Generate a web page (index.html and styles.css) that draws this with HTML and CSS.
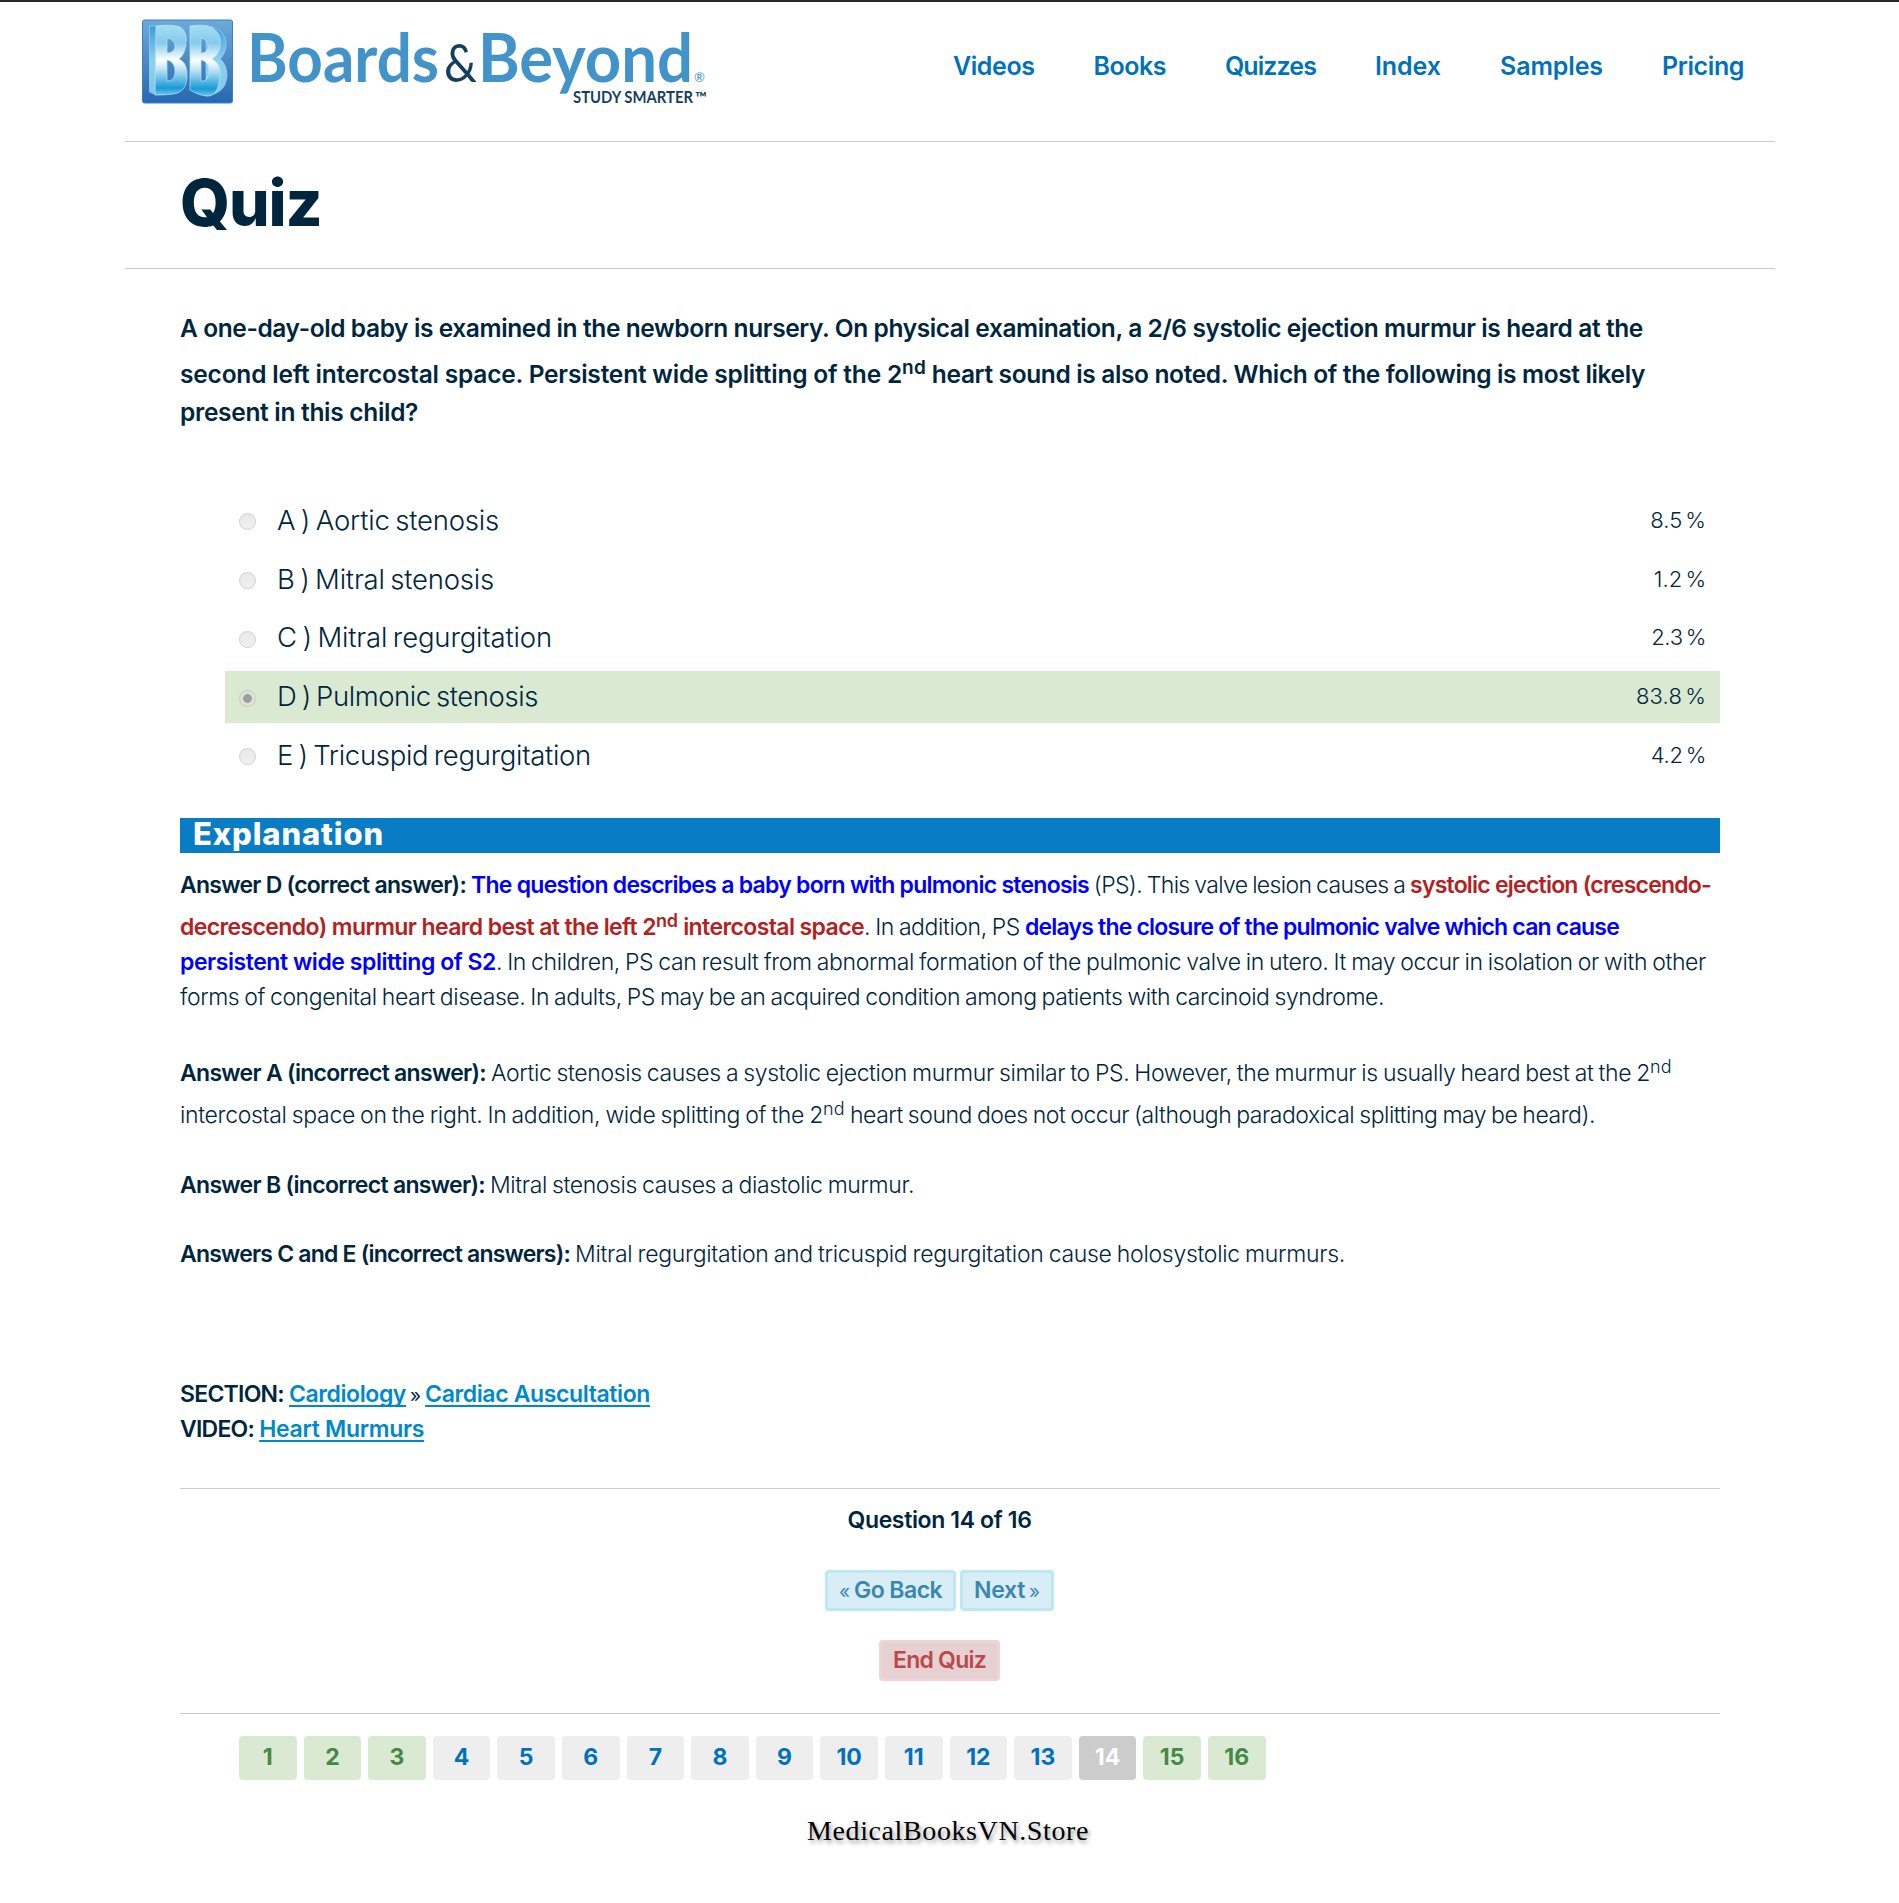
FILE: index.html
```html
<!DOCTYPE html>
<html lang="en">
<head>
<meta charset="utf-8">
<title>Quiz</title>
<link rel="stylesheet" href="styles.css">
</head>
<body>
<header class="header">
  <svg class="logo" width="580" height="92" viewBox="0 0 580 92" role="img" aria-label="Boards and Beyond">
    <defs>
      <linearGradient id="tile" x1="0" y1="0" x2="0" y2="1"><stop offset="0" stop-color="#6eaadb"/><stop offset="1" stop-color="#2668b2"/></linearGradient>
      <linearGradient id="face" x1="0" y1="0" x2="0" y2="1"><stop offset="0" stop-color="#a3def2"/><stop offset=".25" stop-color="#84cbec"/><stop offset=".5" stop-color="#fff"/><stop offset=".62" stop-color="#c5e6f6"/><stop offset=".9" stop-color="#189ad8"/><stop offset="1" stop-color="#6cc6ea"/></linearGradient>
      <linearGradient id="side" x1="0" y1="0" x2="0" y2="1"><stop offset="0" stop-color="#3a9fd8"/><stop offset=".5" stop-color="#8fd0ef"/><stop offset="1" stop-color="#7cc8ea"/></linearGradient>
    </defs>
    <rect x="6.500" y="4" width="90" height="83" rx="2" fill="url(#tile)" stroke="#3f7fc0"/>
    <path d="M13.500 10l7 0v69l-7-3z" fill="url(#side)" stroke="#a5dcf4" stroke-width=".6"/>
    <path d="M70 10c14 1 20 9 20 18 0 7-3 12-6 15 5 4 7 10 7 17-1 10-5 15-13 18l-8 2z" fill="url(#side)" stroke="#a5dcf4" stroke-width=".6"/>
    <path fill-rule="evenodd" d="M20 10q16-2 24 1c5 3 7 9 6 15 0 8-3 14-7 17 6 3 8 8 8 17 0 12-6 17-14 18-8 1-13 1-18 1zM31 22v15c5 0 8-3 8-7s-3-7-8-8zM31 44v21c6 0 8-4 8-10s-3-10-8-11z" fill="url(#face)" stroke="#b9e5f6" stroke-width=".7"/>
    <path fill-rule="evenodd" d="M54 10q14-2 21 1c7 4 10 10 9 17 0 7-3 12-8 15 7 4 9 10 8 17-1 14-6 20-12 20-6 0-13-3-18-6zM65 22v15c5 0 7-3 7-7s-3-7-7-8zM65 44v21c5 1 8-4 8-10s-3-10-8-11z" fill="url(#face)" stroke="#b9e5f6" stroke-width=".7"/>
    <g class="logo-word">
      <text x="111" y="65.500" font-size="67" textLength="192" lengthAdjust="spacingAndGlyphs">Boards</text>
      <text x="342" y="65.500" font-size="67" textLength="215" lengthAdjust="spacingAndGlyphs">Beyond</text>
      <text class="logo-dark" x="308" y="65.500" font-size="53" textLength="33" lengthAdjust="spacingAndGlyphs">&amp;</text>
      <text class="logo-mark" x="558" y="66" font-size="13">®</text>
      <text class="logo-dark logo-tag" x="437" y="87" font-size="17.500" textLength="120" lengthAdjust="spacingAndGlyphs">STUDY SMARTER</text>
      <text class="logo-dark logo-tag" x="559" y="87" font-size="15" textLength="12" lengthAdjust="spacingAndGlyphs">™</text>
    </g>
  </svg>
  <nav class="nav">
    <a class="nav-1">Videos</a><a class="nav-2">Books</a><a class="nav-3">Quizzes</a><a class="nav-4">Index</a><a class="nav-5">Samples</a><a class="nav-6">Pricing</a>
  </nav>
</header>
<section class="title"><h1>Quiz</h1></section>
<main class="main">
  <div class="question">
    <p class="line q-1">A one-day-old baby is examined in the newborn nursery. On physical examination, a 2/6 systolic ejection murmur is heard at the</p>
    <p class="line raised"><span class="q-2">second left intercostal space. Persistent wide splitting of the 2</span><sup>nd</sup><span class="q-3"> heart sound is also noted. Which of the following is most likely</span></p>
    <p class="line q-4">present in this child?</p>
  </div>
  <ul class="options">
    <li class="option"><i class="radio"></i><span class="label opt-a">A ) Aortic stenosis</span><span class="pct">8.5 %</span></li>
    <li class="option"><i class="radio"></i><span class="label opt-b">B ) Mitral stenosis</span><span class="pct">1.2 %</span></li>
    <li class="option"><i class="radio"></i><span class="label opt-c">C ) Mitral regurgitation</span><span class="pct pct-tight">2.3 %</span></li>
    <li class="option correct"><i class="radio on"></i><span class="label opt-d">D ) Pulmonic stenosis</span><span class="pct pct-wide">83.8 %</span></li>
    <li class="option"><i class="radio"></i><span class="label opt-e">E ) Tricuspid regurgitation</span><span class="pct pct-tight">4.2 %</span></li>
  </ul>
  <h2 class="bar">Explanation</h2>
  <div class="explain">
    <p class="line"><b class="d-1">Answer D (correct answer): </b><b class="blue d-2">The question describes a baby born with pulmonic stenosis</b><span class="d-3"> (PS). This valve lesion causes a </span><b class="red d-4">systolic ejection (crescendo-</b></p>
    <p class="line raised"><b class="red d-5">decrescendo) murmur heard best at the left 2</b><sup class="red b d-6">nd</sup><b class="red d-7"> intercostal space</b><span class="d-8">. In addition, PS </span><b class="blue d-9">delays the closure of the pulmonic valve which can cause</b></p>
    <p class="line"><b class="blue d-10">persistent wide splitting of S2</b><span class="d-11">. In children, PS can result from abnormal formation of the pulmonic valve in utero. It may occur in isolation or with other</span></p>
    <p class="line d-12">forms of congenital heart disease. In adults, PS may be an acquired condition among patients with carcinoid syndrome.</p>
  </div>
  <div class="explain">
    <p class="line raised"><b class="a-1">Answer A (incorrect answer): </b><span class="a-2">Aortic stenosis causes a systolic ejection murmur similar to PS. However, the murmur is usually heard best at the 2</span><sup>nd</sup></p>
    <p class="line raised"><span class="a-3">intercostal space on the right. In addition, wide splitting of the 2</span><sup>nd</sup><span class="a-4"> heart sound does not occur (although paradoxical splitting may be heard).</span></p>
  </div>
  <div class="explain loose">
    <p class="line"><b class="b-1">Answer B (incorrect answer): </b><span class="b-2">Mitral stenosis causes a diastolic murmur.</span></p>
  </div>
  <div class="explain">
    <p class="line"><b class="c-1">Answers C and E (incorrect answers): </b><span class="c-2">Mitral regurgitation and tricuspid regurgitation cause holosystolic murmurs.</span></p>
  </div>
  <div class="source">
    <p class="line"><b class="s-1">SECTION: </b><a class="link s-2">Cardiology</a><span class="quo"> » </span><a class="link s-3">Cardiac Auscultation</a></p>
    <p class="line"><b class="s-4">VIDEO: </b><a class="link s-5">Heart Murmurs</a></p>
  </div>
  <div class="controls">
    <p class="line"><b class="count">Question 14 of 16</b></p>
    <div class="buttons"><a class="btn back"><span class="quo">« </span>Go Back</a><a class="btn next">Next<span class="quo"> »</span></a></div>
    <div class="buttons"><a class="btn end">End Quiz</a></div>
  </div>
  <ol class="pages">
    <li class="ok">1</li><li class="ok">2</li><li class="ok">3</li><li>4</li><li>5</li><li>6</li><li>7</li><li>8</li><li>9</li><li>10</li><li>11</li><li>12</li><li>13</li><li class="current">14</li><li class="ok">15</li><li class="ok">16</li>
  </ol>
</main>
<footer class="footer">MedicalBooksVN.Store</footer>
</body>
</html>
```
FILE: styles.css
```css
* { box-sizing: border-box; margin: 0; padding: 0; }
body {
  min-height: 1903px;
  border-top: 2px solid #2a2728;
  background: #fff;
  color: #00263e;
  font: 300 23px/35px Inter, "Liberation Sans", sans-serif;
  word-spacing: -1px;
}

/* Header */
.header {
  display: flex;
  justify-content: space-between;
  width: 1650px;
  height: 140px;
  margin-left: 125px;
  padding: 14px 31px 0 11px;
  border-bottom: 1px solid #c8cacb;
}
.logo { display: block; }
.logo-word { fill: #4193c9; font-family: Lato, sans-serif; font-weight: 700; word-spacing: 0; }
.logo-word .logo-dark { fill: #153f5e; font-weight: 400; }
.logo-word .logo-tag { font-weight: 700; }
.logo-word .logo-mark { font-weight: 400; }
.nav { display: flex; gap: 59px; padding-top: 33px; color: #0072bc; font: 600 25px/35px Inter, sans-serif; white-space: nowrap; }
.nav-1 { letter-spacing: -0.4px; }
.nav-2 { letter-spacing: -0.5px; }
.nav-3 { letter-spacing: -0.935px; }
.nav-4 { letter-spacing: -0.059px; }
.nav-5 { letter-spacing: -0.114px; }
.nav-6 { letter-spacing: -0.413px; }
.title { width: 1650px; height: 127px; margin-left: 125px; padding: 21px 55px; border-bottom: 1px solid #c8cacb; }
.title h1 { font: 800 64px/80px Inter, sans-serif; letter-spacing: -1.1px; }

/* Text lines */
.main { width: 1540px; margin-left: 180px; }
.line { height: 35px; white-space: pre; }
.line.raised { height: 42px; padding-top: 7px; }
b, .b { font-weight: 600; word-spacing: 0; }
sup { font-size: 18px; line-height: 0; vertical-align: 8px; letter-spacing: .281px; }
.blue { color: #00f; }
.red { color: #b22222; }

/* Question */
.question { padding-top: 40px; font-weight: 600; font-size: 24.5px; line-height: 38px; word-spacing: 0; }
.question .line { height: 38px; }
.question .line.raised { height: 46px; padding-top: 8px; }
.question sup { font-size: 19px; vertical-align: 9px; }
.q-1 { letter-spacing: -0.394px; }
.q-2 { letter-spacing: -0.197px; }
.q-3 { letter-spacing: -0.354px; }
.q-4 { letter-spacing: -0.3px; }

/* Options */
.options { display: grid; gap: 6.75px; margin: 63.75px 0 36.25px 45px; list-style: none; }
.option { display: flex; align-items: center; height: 52px; padding: 0 14px 0 14px; white-space: pre; }
.option.correct { background: #dae9d2; }
.radio { width: 17px; height: 17px; margin: 2px 21px 0 0; border: 1px solid #d0d0d0; border-radius: 50%; background: linear-gradient(#e9e9e9, #f0f0f0); }
.radio.on { border-color: #c3cdbd; background: radial-gradient(circle, #9ba199 0 4px, #dde3d9 4.8px); }
.label { margin-top: -1px; font-size: 27.5px; word-spacing: -2px; }
.opt-a { letter-spacing: -0.194px; }
.opt-b { letter-spacing: -0.201px; }
.opt-c { letter-spacing: -0.156px; }
.opt-d { letter-spacing: -0.434px; }
.opt-e { letter-spacing: -0.3px; }
.pct { margin: -1px 0 0 auto; font-size: 22px; word-spacing: -3px; }
.pct-tight { letter-spacing: -0.28px; }
.pct-wide { letter-spacing: .122px; }

/* Explanation */
.bar { height: 35px; margin-bottom: 15px; padding-left: 13px; background: #087cc4; color: #fff; font: 800 31px/32px Inter, sans-serif; letter-spacing: .858px; }
.explain + .explain { margin-top: 34px; }
.explain + .explain.loose { margin-top: 35px; }
.d-1 { letter-spacing: -0.753px; }
.d-2 { letter-spacing: -0.737px; }
.d-3 { letter-spacing: -0.665px; }
.d-4 { letter-spacing: -0.771px; }
.d-5 { letter-spacing: -0.607px; }
.d-6 { letter-spacing: -0.125px; }
.d-7 { letter-spacing: -0.595px; }
.d-8 { letter-spacing: -0.417px; }
.d-9 { letter-spacing: -0.806px; }
.d-10 { letter-spacing: -0.445px; }
.d-11 { letter-spacing: -0.376px; }
.d-12 { letter-spacing: -0.438px; }
.a-1 { letter-spacing: -0.715px; }
.a-2 { letter-spacing: -0.379px; }
.a-3 { letter-spacing: -0.322px; }
.a-4 { letter-spacing: -0.473px; }
.b-1 { letter-spacing: -0.695px; }
.b-2 { letter-spacing: -0.389px; }
.c-1 { letter-spacing: -0.793px; }
.c-2 { letter-spacing: -0.296px; }

/* Section and video links */
.source { margin-top: 104.5px; }
.link { color: #0088cc; font-weight: 600; word-spacing: 0; text-decoration: underline; text-decoration-thickness: 2px; text-underline-offset: 3px; text-decoration-skip-ink: none; }
.quo { font-size: 19px; font-weight: 400; letter-spacing: -0.23px; word-spacing: -1px; }
.s-1 { letter-spacing: -0.74px; }
.s-2 { letter-spacing: -0.411px; }
.s-3 { letter-spacing: -0.375px; }
.s-4 { letter-spacing: -0.76px; }
.s-5 { letter-spacing: -0.297px; }

/* Controls */
.controls { display: flex; flex-direction: column; align-items: center; height: 226px; margin-top: 41px; padding: 14px 21px 0 0; border: solid #c8cacb; border-width: 1px 0; }
.count { letter-spacing: -0.36px; }
.buttons { display: flex; gap: 4px; height: 41px; margin-top: 32px; }
.buttons + .buttons { margin-top: 29px; }
.btn { height: 41px; padding: 0 11px; border: 3px solid #bce8f1; border-radius: 4px; background: #d9edf7; color: #3a87ad; font-weight: 600; line-height: 35px; white-space: pre; word-spacing: 0; }
.btn.back { letter-spacing: -0.556px; }
.btn.next { letter-spacing: -0.3px; }
.btn.end { border-color: #eed3d7; background: #e6d0d2; color: #b94a48; letter-spacing: -0.756px; }
.pages { display: flex; gap: 7px; margin: 22px 0 0 59px; list-style: none; }
.pages li { width: 57.6px; height: 44px; border-radius: 4px; background: #eee; color: #0072bc; font-weight: 700; line-height: 42px; text-align: center; }
.pages .ok { background: #dae9d2; color: #468847; }
.pages .current { background: #ccc; color: #fff; }

.footer { margin: 33px 0 0 807px; color: #000; font: 28px/35px "Liberation Serif", serif; letter-spacing: .607px; text-shadow: 2px 3px 4px rgba(0, 0, 0, .4); }
```
